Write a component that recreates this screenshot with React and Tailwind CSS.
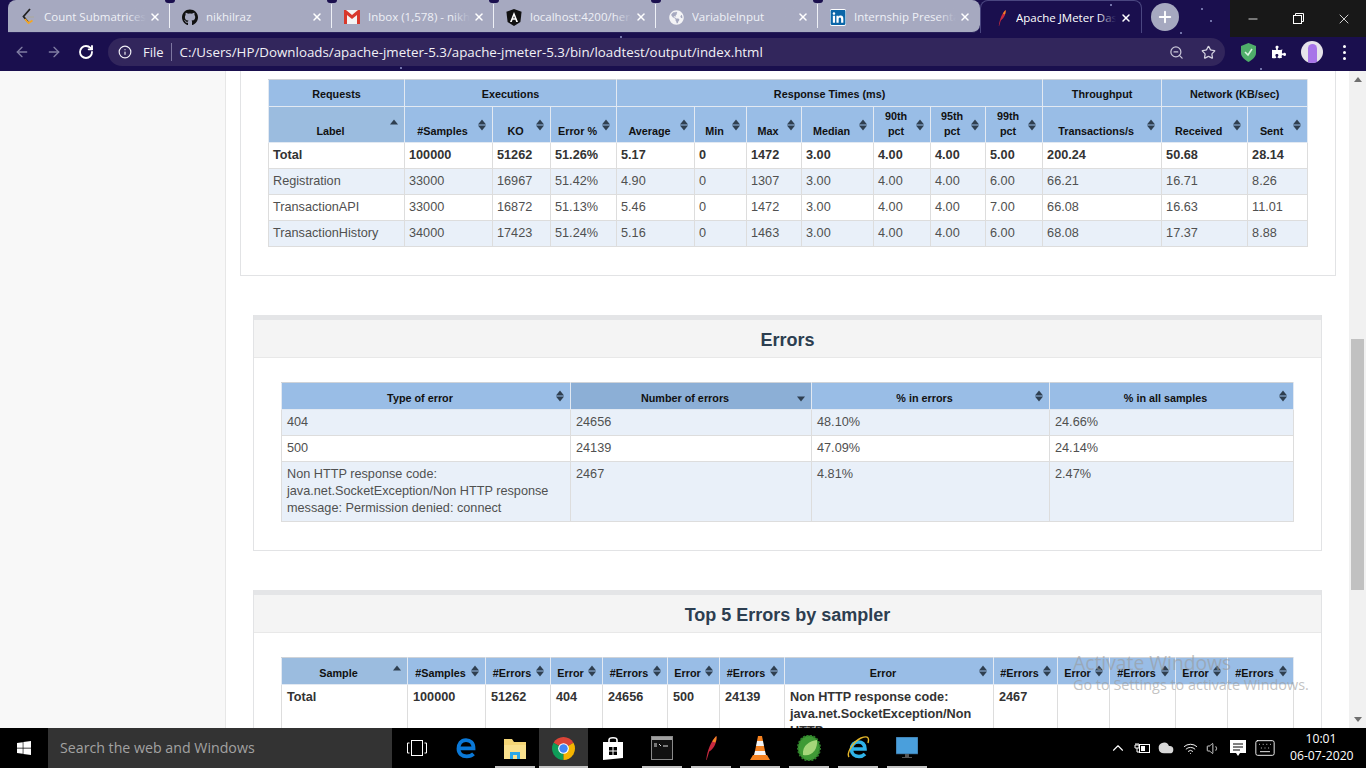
import React from "react";
import { ArrowLeft, ArrowRight, RotateCw, Info, ZoomOut, Star, Plus, X, Minus, ChevronUp, Cloud, Wifi, Volume1, Keyboard } from "lucide-react";
import { FaGithub, FaLinkedin, FaGlobeAmericas, FaWindows, FaPuzzlePiece } from "react-icons/fa";

const Sort = ({ dir }) => (
  <svg width="8" height="12" viewBox="0 0 8 12" className="absolute right-[6px] top-1/2 -translate-y-[6px]">
    {dir !== "desc" && <path d="M4 0.5 L8 5.4 H0 Z" fill="#2f3f50" />}
    {dir !== "asc" && <path d="M0 6.6 H8 L4 11.5 Z" fill="#2f3f50" />}
  </svg>
);

const Th = ({ children, sort, noSort, bg = "bg-[#99bde6]", colSpan, h = "h-[27px]" }) => (
  <th colSpan={colSpan} className={`relative ${bg} ${h} border border-[#e2e9f2] border-t-[#cfd3d8] align-bottom pl-1 ${noSort ? "pr-1 pb-[4px]" : "pr-[16px] pb-[3px]"} pt-0 text-center text-[10.8px] leading-[15px] font-bold text-[#111]`}>
    {children}
    {!noSort && <Sort dir={sort} />}
  </th>
);

const Td = ({ children, bold }) => (
  <td className={`border border-[#dddddd] align-top px-[4px] py-[4px] text-[12.7px] leading-[17px] ${bold ? "font-bold text-[#333]" : "text-[#505050]"}`}>{children}</td>
);

const Row = ({ cells, bold, odd }) => (
  <tr className={odd ? "bg-[#e9f0f9]" : "bg-white"}>
    {cells.map((c, i) => <Td key={i} bold={bold}>{c}</Td>)}
  </tr>
);

const Panel = ({ title, children }) => (
  <section className="mx-[27px] mb-[39px] w-[1069px] border border-[#e2e3e5] border-t-0 bg-white shrink-0">
    <div className="h-[43px] pt-[4px] border-t-[5px] border-[#e4e5e7] border-b border-b-[#e8e8e8] bg-[#f4f4f4] flex items-center justify-center">
      <h2 className="text-[18px] font-bold text-[#2c3e50]">{title}</h2>
    </div>
    <div className="pl-[27px] pt-[24px] pb-[28px]">{children}</div>
  </section>
);

const statsRows = [
  ["Registration", "33000", "16967", "51.42%", "4.90", "0", "1307", "3.00", "4.00", "4.00", "6.00", "66.21", "16.71", "8.26"],
  ["TransactionAPI", "33000", "16872", "51.13%", "5.46", "0", "1472", "3.00", "4.00", "4.00", "7.00", "66.08", "16.63", "11.01"],
  ["TransactionHistory", "34000", "17423", "51.24%", "5.16", "0", "1463", "3.00", "4.00", "4.00", "6.00", "68.08", "17.37", "8.88"],
];

const StatsTable = () => (
  <table className="table-fixed border-collapse w-[1039px]">
    <colgroup>
      <col className="w-[136px]" /><col className="w-[88px]" /><col className="w-[58px]" /><col className="w-[66px]" /><col className="w-[78px]" /><col className="w-[52px]" /><col className="w-[55px]" /><col className="w-[72px]" /><col className="w-[57px]" /><col className="w-[55px]" /><col className="w-[57px]" /><col className="w-[119px]" /><col className="w-[86px]" /><col className="w-[60px]" />
    </colgroup>
    <thead>
      <tr>
        <Th noSort>Requests</Th>
        <Th noSort colSpan={3}>Executions</Th>
        <Th noSort colSpan={7}>Response Times (ms)</Th>
        <Th noSort>Throughput</Th>
        <Th noSort colSpan={2}>Network (KB/sec)</Th>
      </tr>
      <tr>
        <Th sort="asc" bg="bg-[#9bbcdf]" h="h-[36px]">Label</Th>
        {["#Samples", "KO", "Error %", "Average", "Min", "Max", "Median"].map((t) => <Th key={t} h="h-[36px]">{t}</Th>)}
        <Th h="h-[36px]">90th<br />pct</Th>
        <Th h="h-[36px]">95th<br />pct</Th>
        <Th h="h-[36px]">99th<br />pct</Th>
        {["Transactions/s", "Received", "Sent"].map((t) => <Th key={t} h="h-[36px]">{t}</Th>)}
      </tr>
    </thead>
    <tbody>
      <Row bold cells={["Total", "100000", "51262", "51.26%", "5.17", "0", "1472", "3.00", "4.00", "4.00", "5.00", "200.24", "50.68", "28.14"]} />
      {statsRows.map((r, i) => <Row key={r[0]} cells={r} odd={i % 2 === 0} />)}
    </tbody>
  </table>
);

const ErrorsTable = () => (
  <table className="table-fixed border-collapse w-[1012px] [&_td]:pl-[5px]">
    <colgroup>
      <col className="w-[289px]" /><col className="w-[241px]" /><col className="w-[238px]" /><col className="w-[244px]" />
    </colgroup>
    <thead>
      <tr>
        <Th>Type of error</Th>
        <Th sort="desc" bg="bg-[#8cafd6]">Number of errors</Th>
        <Th>% in errors</Th>
        <Th>% in all samples</Th>
      </tr>
    </thead>
    <tbody>
      <Row odd cells={["404", "24656", "48.10%", "24.66%"]} />
      <Row cells={["500", "24139", "47.09%", "24.14%"]} />
      <Row odd cells={[<span key="m">Non HTTP response code:<br />java.net.SocketException/Non HTTP response message: Permission denied: connect</span>, "2467", "4.81%", "2.47%"]} />
    </tbody>
  </table>
);

const TopTable = () => (
  <table className="table-fixed border-collapse w-[1012px] [&_td]:pl-[5px]">
    <colgroup>
      <col className="w-[126px]" /><col className="w-[78px]" /><col className="w-[65px]" /><col className="w-[52px]" /><col className="w-[65px]" /><col className="w-[52px]" /><col className="w-[65px]" /><col className="w-[209px]" /><col className="w-[64px]" /><col className="w-[52px]" /><col className="w-[66px]" /><col className="w-[52px]" /><col className="w-[66px]" />
    </colgroup>
    <thead>
      <tr>
        <Th sort="asc" bg="bg-[#9bbcdf]">Sample</Th>
        {["#Samples", "#Errors", "Error", "#Errors", "Error", "#Errors", "Error", "#Errors", "Error", "#Errors", "Error", "#Errors"].map((t, i) => <Th key={i}>{t}</Th>)}
      </tr>
    </thead>
    <tbody>
      <Row bold cells={["Total", "100000", "51262", "404", "24656", "500", "24139", <span key="e">Non HTTP response code: java.net.SocketException/Non HTTP response message: Permission denied: connect</span>, "2467", "", "", "", ""]} />
    </tbody>
  </table>
);

const CodeIcon = () => (
  <svg width="16" height="18" viewBox="0 0 16 18" fill="none" strokeWidth="1.8">
    <path d="M10 1 L3.5 8.5 L8 14" stroke="#222" />
    <path d="M5 11 L8.5 15 L12.5 12.5" stroke="#f5a623" />
    <path d="M7 9 H14" stroke="#aaa" />
  </svg>
);
const GmailIcon = () => (
  <svg width="16" height="14" viewBox="0 0 16 14">
    <rect x="0" y="0" width="16" height="14" fill="#f4f4f4" />
    <path d="M0 0 H2 L8 5 L14 0 H16 V14 H13 V5 L8 9 L3 5 V14 H0 Z" fill="#d8382c" />
  </svg>
);
const AngularIcon = () => (
  <svg width="16" height="17" viewBox="0 0 16 17">
    <path d="M8 0 L15.6 2.7 L14.4 13 L8 17 L1.6 13 L0.4 2.7 Z" fill="#111" />
    <path d="M8 3 L12 13 H10.2 L9.4 10.8 H6.6 L5.8 13 H4 Z M7.2 9.3 H8.8 L8 7.1 Z" fill="#fff" fillRule="evenodd" />
  </svg>
);
const Feather = ({ w = 10, h = 20 }) => (
  <svg width={w} height={h} viewBox="0 0 10 20">
    <path d="M1 20 C2 12 5 4 9.5 0 C10 5 8 10 3.5 13 L1.4 20 Z" fill="#c7293f" />
    <path d="M6 4.5 C7 3 8.5 1 9.5 0 C9.8 2 9.3 4 8.5 5.5 Z" fill="#f08a24" />
  </svg>
);

const tabs = [
  { t: "Count Submatrices with all ones", i: <CodeIcon /> },
  { t: "nikhilraz", i: <FaGithub className="text-[#111] text-[17px]" /> },
  { t: "Inbox (1,578) - nikhil", i: <GmailIcon /> },
  { t: "localhost:4200/heroes", i: <AngularIcon /> },
  { t: "VariableInput", i: <FaGlobeAmericas className="text-[#f4f4f6] text-[15px]" /> },
  { t: "Internship Presentation", i: <FaLinkedin className="text-[#0a66a8] text-[17px] bg-white rounded-[2px]" /> },
];

const Tab = ({ tab, first, last }) => (
  <div className={`relative h-full w-[162px] flex items-center pt-[2px] pl-[12px] pr-[6px] ${!first ? "" : "rounded-tl-lg"} ${last ? "rounded-br-lg" : ""}`}>
    <div className="w-[16px] h-[18px] flex items-center justify-center shrink-0">{tab.i}</div>
    <div className="relative ml-[8px] w-[102px] overflow-hidden whitespace-nowrap text-[11.5px] text-[#eef0f6]">
      {tab.t}
      <div className="absolute right-0 top-0 h-full w-[18px] bg-gradient-to-r from-transparent to-[#a6a9c0]" />
    </div>
    <X size={12} strokeWidth={3} className="text-white ml-[3px] shrink-0" />
    {!last && <div className="absolute right-0 top-[4px] h-[24px] w-px bg-[#eef0f6]" />}
    {!last && <div className="absolute -right-[5px] top-0 h-[3px] w-[10px] rounded-b-full bg-[#1a0f4e]" />}
  </div>
);

const stars = ["left-[1201px] top-[8px]", "left-[1110px] top-[40px]", "left-[1180px] top-[32px]", "left-[1210px] top-[20px]", "left-[1110px] top-[4px]", "left-[1260px] top-[68px]", "left-[620px] top-[36px]", "left-[400px] top-[67px]"];

const Header = () => (
  <header className="relative h-[71px] shrink-0 bg-[#1a0f4e]">
    {stars.map((c) => <div key={c} className={`absolute ${c} h-[2px] w-[2px] rounded-full bg-[#8f94c8]`} />)}
    <div className="relative flex h-[33px] pl-[8px] items-start">
      <div className="flex h-[33px] w-[972px] bg-[#a6a9c0] rounded-t-lg rounded-br-lg border-b border-[#27205a]">
        {tabs.map((tab, i) => <Tab key={i} tab={tab} first={i === 0} last={i === 5} />)}
      </div>
      <div className="h-[33px] w-[162px] flex items-center pt-[2px] pl-[17px] pr-[9px] rounded-t-lg border border-b-0 border-[#4a4680]">
        <Feather w={8} h={20} />
        <div className="relative ml-[10px] w-[100px] overflow-hidden whitespace-nowrap text-[11.5px] text-white">
          Apache JMeter Dashboard
          <div className="absolute right-0 top-0 h-full w-[18px] bg-gradient-to-r from-transparent to-[#1a0f4e]" />
        </div>
        <X size={12} strokeWidth={3} className="text-white ml-[4px] shrink-0" />
      </div>
      <div className="ml-[9px] mt-[3px] h-[28px] w-[28px] rounded-full bg-[#a6a9c0] flex items-center justify-center">
        <Plus size={18} strokeWidth={2.5} className="text-white" />
      </div>
      <div className="ml-auto h-[37px] w-[136px] bg-[#181818] flex items-center text-white">
        <div className="w-[46px] flex justify-center"><Minus size={14} strokeWidth={1.4} /></div>
        <div className="w-[45px] flex justify-center">
          <svg width="11" height="11" viewBox="0 0 11 11" fill="none" stroke="#fff"><rect x="0.5" y="2.5" width="8" height="8" /><path d="M2.5 2.5 V0.5 H10.5 V8.5 H8.5" /></svg>
        </div>
        <div className="w-[45px] flex justify-center"><X size={16} strokeWidth={1.2} /></div>
      </div>
    </div>
    <div className="relative flex h-[38px] items-center">
      <div className="w-[108px] flex items-center pl-[14px] gap-[16px] shrink-0">
        <ArrowLeft size={16} className="text-[#807da3]" />
        <ArrowRight size={16} className="text-[#807da3]" />
        <RotateCw size={16} strokeWidth={2.8} className="text-white" />
      </div>
      <div className="h-[28px] w-[1117px] rounded-full bg-[#32265c] flex items-center pl-[10px] pr-[8px] text-[#f1f0f6]">
        <Info size={14} />
        <span className="ml-[11px] mt-[1px] text-[13px]">File</span>
        <span className="ml-[7px] h-[18px] w-px bg-[#7d76a0]" />
        <span className="ml-[8px] mt-[1px] text-[13.33px] whitespace-nowrap">C:/Users/HP/Downloads/apache-jmeter-5.3/apache-jmeter-5.3/bin/loadtest/output/index.html</span>
        <ZoomOut size={15} className="ml-auto text-[#c9c6d8]" />
        <Star size={15} className="ml-[17px] mr-[1px] text-[#d4d2e0]" />
      </div>
      <div className="flex items-center">
        <svg width="15" height="19" viewBox="0 0 15 19" className="ml-[16px]">
          <path d="M7.5 0 L15 3 V10 C15 14 11 17 7.5 19 C4 17 0 14 0 10 V3 Z" fill="#4fae6a" />
          <path d="M4 9 L7 12 L11 6" stroke="#d7f3df" strokeWidth="1.6" fill="none" />
        </svg>
        <FaPuzzlePiece className="ml-[16px] text-white text-[14px]" />
        <div className="ml-[15px] h-[22px] w-[22px] rounded-full bg-[#e6e3ea] flex items-start justify-center overflow-hidden">
          <div className="mt-[3px] h-[19px] w-[9px] rounded-t-full bg-[#a774e8]" />
        </div>
        <div className="ml-[20px] flex flex-col gap-[3px]">
          <span className="h-[3px] w-[3px] rounded-full bg-white" />
          <span className="h-[3px] w-[3px] rounded-full bg-white" />
          <span className="h-[3px] w-[3px] rounded-full bg-white" />
        </div>
      </div>
    </div>
  </header>
);

const Scrollbar = () => (
  <div className="w-[17px] shrink-0 bg-[#f1f1f1] flex flex-col items-center">
    <div className="h-[17px] w-full flex items-center justify-center">
      <svg width="8" height="5" viewBox="0 0 8 5"><path d="M4 0 L8 5 H0 Z" fill="#6f6f6f" /></svg>
    </div>
    <div className="mt-[251px] h-[251px] w-[13px] bg-[#c1c1c1]" />
    <div className="mt-auto h-[17px] w-full flex items-center justify-center">
      <svg width="8" height="5" viewBox="0 0 8 5"><path d="M0 0 H8 L4 5 Z" fill="#6f6f6f" /></svg>
    </div>
  </div>
);

const ChromeIcon = () => (
  <svg width="23" height="23" viewBox="0 0 24 24">
    <path d="M12 12 L22.39 6 A12 12 0 0 0 1.61 6 Z" fill="#db4437" />
    <path d="M12 12 L1.61 6 A12 12 0 0 0 12 24 Z" fill="#0f9d58" />
    <path d="M12 12 L12 24 A12 12 0 0 0 22.39 6 Z" fill="#f4b400" />
    <circle cx="12" cy="12" r="5.6" fill="#fff" />
    <circle cx="12" cy="12" r="4.4" fill="#4285f4" />
  </svg>
);
const FolderIcon = () => (
  <svg width="22" height="22" viewBox="0 0 22 22">
    <path d="M0 2 H8 L10 5 H22 V22 H0 Z" fill="#f4d576" />
    <path d="M0 8 H22 V22 H0 Z" fill="#f9e08d" />
    <path d="M6 22 V15 H16 V22 H13 V18 H9 V22 Z" fill="#2aa7e8" />
  </svg>
);
const StoreIcon = () => (
  <svg width="20" height="24" viewBox="0 0 20 24">
    <path d="M6 7 V4 C6 1 14 1 14 4 V7" stroke="#fff" strokeWidth="1.6" fill="none" />
    <path d="M0 6 H20 V22 L0 24 Z" fill="#fff" />
    <path d="M6 11 H9.5 V14.5 H6 Z M10.5 11 H14 V14.5 H10.5 Z M6 15.5 H9.5 V19 H6 Z M10.5 15.5 H14 V19 H10.5 Z" fill="#000" />
  </svg>
);
const CmdIcon = () => (
  <svg width="22" height="24" viewBox="0 0 22 24">
    <rect x="0.5" y="0.5" width="21" height="23" fill="#111" stroke="#8a8a8a" />
    <rect x="1" y="1" width="20" height="3" fill="#a0a0a0" />
    <path d="M3 8 H6 M3 10 H6 M8 8 L10 10 M12 10 H17" stroke="#ddd" strokeWidth="1" />
  </svg>
);
const VlcIcon = () => (
  <svg width="20" height="24" viewBox="0 0 20 24">
    <path d="M8 0 H12 L13 5 H7 Z" fill="#f58220" />
    <path d="M7 5 H13 L14 10 H6 Z" fill="#f4f4f4" />
    <path d="M6 10 H14 L15 15 H5 Z" fill="#f58220" />
    <path d="M5 15 H15 L16 19 H4 Z" fill="#f4f4f4" />
    <path d="M3 19 H17 L20 24 H0 Z" fill="#f58220" />
  </svg>
);
const SpringIcon = () => (
  <svg width="24" height="26" viewBox="0 0 24 26">
    <ellipse cx="12" cy="13" rx="11" ry="12.5" fill="#3f9a35" stroke="#2e7f2a" strokeWidth="2" strokeDasharray="2 1.5" />
    <path d="M6 20 C5 10 13 6 20 5 C21 14 15 22 6 20 Z" fill="#a5d67a" />
  </svg>
);
const MonitorIcon = () => (
  <svg width="22" height="22" viewBox="0 0 22 22">
    <rect x="0" y="0" width="22" height="17" fill="#4a9fdc" stroke="#2d4e69" strokeWidth="0.6" />
    <rect x="9" y="17" width="4" height="3" fill="#555" />
    <rect x="6" y="20" width="10" height="1" fill="#555" />
  </svg>
);
const EdgeE = () => (
  <svg width="20" height="22" viewBox="0 0 24 25" fill="none">
    <path d="M4 13 H21 C21 6 17 3 12 3 C6 3 3 8 3 13.5 C3 19 7 22.5 13 22.5 C16 22.5 19 21.5 21 19.5" stroke="#0a78d7" strokeWidth="4.6" />
  </svg>
);
const IeIcon = () => (
  <svg width="24" height="26" viewBox="0 0 24 26" fill="none">
    <path d="M6 14 H19 C19 9 16 7 12.5 7 C8 7 5.5 10 5.5 14.5 C5.5 19 9 21.5 13 21.5 C15.5 21.5 17.5 20.5 19 19" stroke="#2fb3e8" strokeWidth="3.6" />
    <path d="M3 22 C0 18 8 6 15 3 C20 1 24 1 22 8" stroke="#e5b72a" strokeWidth="1.4" />
  </svg>
);

const TaskItem = ({ children, run, active }) => (
  <div className={`relative w-[49px] h-full flex items-center justify-center ${active ? "bg-[#333333]" : ""}`}>
    {children}
    {run && <div className={`absolute bottom-0 ${active ? "left-0 right-0" : "left-[5px] right-[4px]"} h-[2px] bg-[#c4c4c4]`} />}
  </div>
);

const Taskbar = () => (
  <footer className="h-[40px] shrink-0 bg-black flex items-center text-white font-['Open_Sans',sans-serif]">
    <div className="w-[48px] flex justify-center"><FaWindows className="text-[16px] text-white" /></div>
    <div className="w-[344px] h-full bg-[#333333] flex items-center pl-[12px] text-[14.2px] text-[#a2a2a2]">Search the web and Windows</div>
    <div className="flex h-full">
      <TaskItem>
        <svg width="20" height="16" viewBox="0 0 20 16" fill="none" stroke="#fff"><rect x="4.5" y="0.5" width="11" height="15" /><path d="M2.5 3 H0.5 V13 H2.5 M17.5 3 H19.5 V13 H17.5" /></svg>
      </TaskItem>
      <TaskItem><EdgeE /></TaskItem>
      <TaskItem run><FolderIcon /></TaskItem>
      <TaskItem run active><ChromeIcon /></TaskItem>
      <TaskItem><StoreIcon /></TaskItem>
      <TaskItem run><CmdIcon /></TaskItem>
      <TaskItem run><Feather w={12} h={26} /></TaskItem>
      <TaskItem run><VlcIcon /></TaskItem>
      <TaskItem run><SpringIcon /></TaskItem>
      <TaskItem run><IeIcon /></TaskItem>
      <TaskItem run><MonitorIcon /></TaskItem>
    </div>
    <div className="ml-auto flex items-center h-full pr-[14px]">
      <div className="w-[24px] flex justify-center"><ChevronUp size={18} strokeWidth={1.5} /></div>
      <div className="w-[24px] flex justify-center">
        <svg width="16" height="12" viewBox="0 0 16 12" fill="none" stroke="#fff"><rect x="5.5" y="2.5" width="10" height="8" /><rect x="7" y="4" width="4" height="5" fill="#fff" stroke="none" /><path d="M1 3 H5 V6 H1 Z M2 1 V3 M4 1 V3 M3 6 V10 H5.5" /></svg>
      </div>
      <div className="w-[24px] flex justify-center"><Cloud size={16} fill="#d8d8d8" className="text-[#d8d8d8]" /></div>
      <div className="w-[24px] flex justify-center"><Wifi size={15} strokeWidth={1.5} /></div>
      <div className="w-[22px] flex justify-center"><Volume1 size={15} strokeWidth={1.3} /></div>
      <div className="w-[28px] flex justify-center">
        <svg width="16" height="17" viewBox="0 0 16 17"><path d="M0 0 H16 V13 H10 L8 16 L6 13 H0 Z" fill="#fff" /><path d="M3 4 H13 M3 7 H13 M3 10 H10" stroke="#000" /></svg>
      </div>
      <div className="w-[26px] flex justify-center"><Keyboard size={22} strokeWidth={1} /></div>
      <div className="w-[62px] ml-[12px] -mt-[3px] text-center text-[12.2px] leading-[17px] whitespace-nowrap">
        <div>10:01</div>
        <div>06-07-2020</div>
      </div>
    </div>
  </footer>
);

export default function App() {
  return (
    <div className="relative flex h-screen w-screen flex-col overflow-hidden font-['Open_Sans',sans-serif]">
      <Header />
      <div className="flex flex-1 min-h-0 font-['Liberation_Sans',Arial,sans-serif]">
        <aside className="w-[226px] shrink-0 bg-[#f8f8f8] border-r border-[#e7e7e7]" />
        <main className="flex-1 min-w-0 bg-white overflow-hidden flex flex-col">
          <section className="ml-[14px] w-[1096px] shrink-0 mb-[39px] border border-t-0 border-[#e2e3e5] pl-[27px] pt-[8px] pb-[28px]">
            <StatsTable />
          </section>
          <Panel title="Errors"><ErrorsTable /></Panel>
          <Panel title="Top 5 Errors by sampler"><TopTable /></Panel>
        </main>
        <Scrollbar />
      </div>
      <Taskbar />
      <div className="absolute left-[1073px] top-[650px] text-[#9a9a9a]/60 pointer-events-none">
        <div className="text-[19.3px] leading-[25px]">Activate Windows</div>
        <div className="text-[14.4px] leading-[20px]">Go to Settings to activate Windows.</div>
      </div>
    </div>
  );
}
